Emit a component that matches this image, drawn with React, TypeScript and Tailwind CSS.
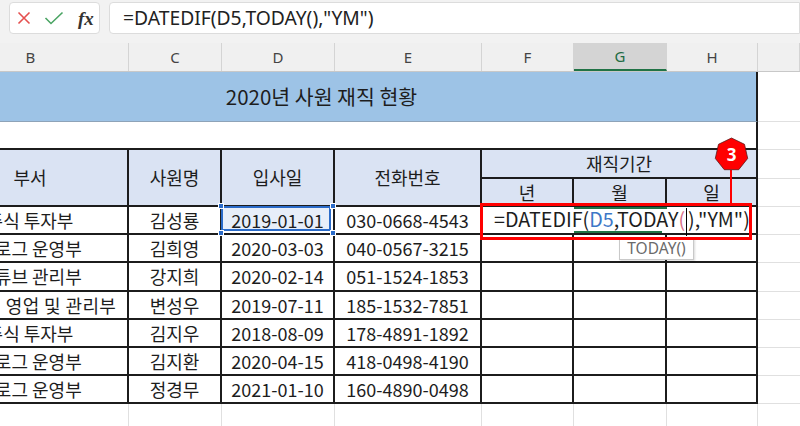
import React from "react";

const KR = "font-['Noto_Sans_CJK_KR','Noto_Sans',sans-serif]";

const rows = [
  { dept: "주식 투자부", name: "김성룡", date: "2019-01-01", phone: "030-0668-4543", shift: "" },
  { dept: "블로그 운영부", name: "김희영", date: "2020-03-03", phone: "040-0567-3215", shift: "" },
  { dept: "유튜브 관리부", name: "강지희", date: "2020-02-14", phone: "051-1524-1853", shift: "" },
  { dept: "영업 및 관리부", name: "변성우", date: "2019-07-11", phone: "185-1532-7851", shift: "pl-[62px] tracking-[0.4px]" },
  { dept: "주식 투자부", name: "김지우", date: "2018-08-09", phone: "178-4891-1892", shift: "" },
  { dept: "블로그 운영부", name: "김지환", date: "2020-04-15", phone: "418-0498-4190", shift: "" },
  { dept: "블로그 운영부", name: "정경무", date: "2021-01-10", phone: "160-4890-0498", shift: "" },
];

const letters = ["B", "C", "D", "E", "F", "G", "H", ""];

// cell with black table borders
const td = "border-r-2 border-b-2 border-[#1c1c1c] flex items-center justify-center";
const grid = "border-b border-[#e0e0e0]";

export default function App() {
  return (
    <div className={`w-[800px] h-[426px] overflow-hidden bg-white relative ${KR} text-[#1d1d1d]`}>
      {/* formula bar */}
      <div className="h-[43px] bg-[#f2f2f2] flex items-start pt-[2px]">
        <div className="ml-[9px] w-[91px] h-[32px] bg-white border border-[#dcdcdc] rounded-[4px] flex items-center">
          <svg width="14" height="14" viewBox="0 0 14 14" className="ml-[7px]">
            <path d="M1.5 1.5 L12.5 12.5 M12.5 1.5 L1.5 12.5" stroke="#e5504f" strokeWidth="1.6" fill="none" />
          </svg>
          <svg width="20" height="14" viewBox="0 0 20 14" className="ml-[13px]">
            <path d="M1.5 7 L7 12.5 L18.5 1.5" stroke="#4aa463" strokeWidth="1.6" fill="none" />
          </svg>
          <span className="ml-[14px] font-['Liberation_Serif',serif] italic font-bold text-[19px] text-[#333] leading-none">fx</span>
        </div>
        <div className="ml-[9px] flex-1 h-[32px] bg-white border border-[#dcdcdc] rounded-l-[4px] flex items-center pl-[13px] font-['Noto_Sans',sans-serif] text-[19.3px] text-[#222]">
          =DATEDIF(D5,TODAY(),"YM")
        </div>
      </div>

      {/* column headers */}
      <div className="ml-[-67px] grid grid-cols-[196px_93px_113px_147px_92px_93px_91px_1fr] h-[29px] bg-[#f0f0f0] border-b border-[#c8c8c8] font-['Noto_Sans',sans-serif] text-[15px] text-[#444]">
        {letters.map((l, i) => (
          <div
            key={i}
            className={`flex items-center justify-center border-r border-[#d4d4d4] ${
              l === "G" ? "bg-[#d4d4d4] text-[#1e6b43] border-b-2 border-b-[#217346]" : ""
            }`}
          >
            {l}
          </div>
        ))}
      </div>

      {/* sheet */}
      <div className="ml-[-67px] grid grid-cols-[196px_93px_113px_147px_92px_93px_91px_1fr] grid-rows-[50px_28px_29px_28px_28px_28px_29px_28px_28px_28px_28px_28px] text-[18px]">
        {/* row 1 title */}
        <div className="col-span-7 bg-[#9dc3e6] border-r-2 border-r-[#1c1c1c] border-b border-b-[#8ea3b8] flex items-center justify-center pr-[46px] text-[20.5px]">
          2020년 사원 재직 현황
        </div>
        <div className={grid} />

        {/* row 2 */}
        <div className="col-span-7 border-r-2 border-b-2 border-[#1c1c1c]" />
        <div className={grid} />

        {/* header rows */}
        <div className={`${td} row-span-2 bg-[#dae3f3]`}>부서</div>
        <div className={`${td} row-span-2 bg-[#dae3f3]`}>사원명</div>
        <div className={`${td} row-span-2 bg-[#dae3f3]`}>입사일</div>
        <div className={`${td} row-span-2 bg-[#dae3f3]`}>전화번호</div>
        <div className={`${td} col-span-3 bg-[#dae3f3]`}>재직기간</div>
        <div className={grid} />
        <div className={`${td} bg-[#dae3f3]`}>년</div>
        <div className={`${td} bg-[#dae3f3]`}>월</div>
        <div className={`${td} bg-[#dae3f3]`}>일</div>
        <div className={grid} />

        {rows.map((r, i) => (
          <React.Fragment key={i}>
            <div className={`${td} ${r.shift} whitespace-nowrap`}>{r.dept}</div>
            <div className={td}>{r.name}</div>
            {i === 0 ? (
              <div className={`${td} relative`}>
                <div className="absolute inset-0 bottom-[2px] right-[2px] left-[-1px] top-[-1px] bg-[#e7eef9] border-2 border-[#2a6bc9]" />
                <span className="relative">{r.date}</span>
                <span className="absolute left-[-4px] top-[-4px] w-[6px] h-[6px] bg-[#2a6bc9] border border-white" />
                <span className="absolute right-[-3px] top-[-4px] w-[6px] h-[6px] bg-[#2a6bc9] border border-white" />
                <span className="absolute left-[-4px] bottom-[-3px] w-[6px] h-[6px] bg-[#2a6bc9] border border-white" />
                <span className="absolute right-[-3px] bottom-[-3px] w-[6px] h-[6px] bg-[#2a6bc9] border border-white" />
              </div>
            ) : (
              <div className={td}>{r.date}</div>
            )}
            <div className={td}>{r.phone}</div>
            {i === 0 ? (
              <div className="col-span-3 border-r-2 border-b-2 border-[#1c1c1c] bg-white relative flex items-center pl-[12px] whitespace-nowrap text-[19.7px]">
                <span className="absolute left-[92px] top-0 w-[93px] h-[2px] bg-[#217346]" />
                <span className="absolute left-[92px] bottom-0 w-[88px] h-[2px] bg-[#217346]" />
                <span>
                  =DATEDIF(<span className="text-[#3d78c7]">D5</span>,TODAY
                  <span className="text-[#d9708a]">(</span>
                  <span className="inline-block w-px h-[28px] bg-black align-middle mx-[1px]" />
                  ),"YM")
                </span>
              </div>
            ) : (
              <>
                <div className={td} />
                <div className={td} />
                <div className={td} />
              </>
            )}
            <div className={grid} />
          </React.Fragment>
        ))}

        {/* trailing empty row */}
        {letters.map((_, i) => (
          <div key={i} className={i < 7 ? "border-r border-[#e0e0e0]" : ""} />
        ))}
      </div>

      {/* tooltip */}
      <div className="absolute left-[619px] top-[238px] w-[75px] h-[22px] bg-white border border-[#c9c9c9] shadow-[1px_1px_2px_rgba(0,0,0,0.15)] flex items-center justify-center font-['Noto_Sans',sans-serif] text-[15.5px] text-[#6b6b6b]">
        TODAY()
      </div>

      {/* annotation */}
      <div className="absolute left-[480px] top-[203px] w-[272px] h-[37px] border-[3px] border-[#ff0000]" />
      <div className="absolute left-[730px] top-[170px] w-[2px] h-[34px] bg-[#ff0000]" />
      <svg className="absolute left-[714px] top-[137px]" width="35" height="36" viewBox="0 0 35 36">
        <polygon
          points="17.5,1 30.5,7.3 33.7,21.4 24.7,32.7 10.3,32.7 1.3,21.4 4.5,7.3"
          fill="#ff0000"
          stroke="#5a1a1a"
          strokeWidth="0.8"
        />
        <text x="17.5" y="24" textAnchor="middle" fontSize="17" fontWeight="bold" fill="#fff" fontFamily="Noto Sans, sans-serif">
          3
        </text>
      </svg>
    </div>
  );
}
